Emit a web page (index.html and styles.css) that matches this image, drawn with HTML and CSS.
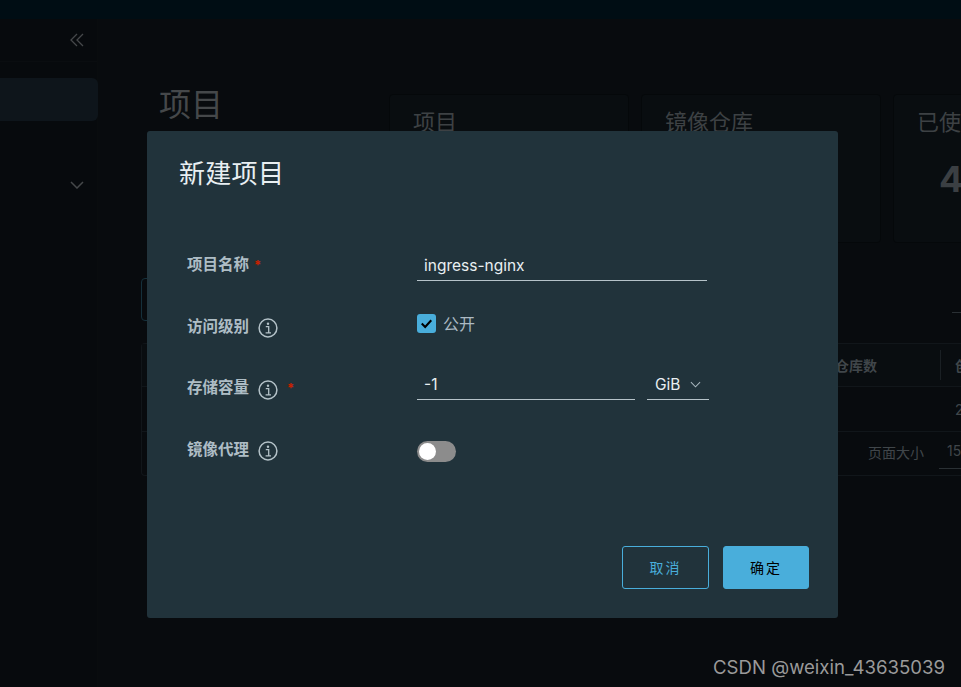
FILE: index.html
```html
<!DOCTYPE html>
<html lang="zh-CN">
<head>
<meta charset="utf-8">
<title>新建项目</title>
<link rel="stylesheet" href="styles.css">
</head>
<body>
<header class="topbar"></header>
<div class="shell">
  <aside class="sidebar">
    <div class="collapse">
      <svg class="collapse-icon" viewBox="0 0 14 14" width="14" height="14"><path d="M7 1 1 7l6 6M13 1 7 7l6 6" fill="none" stroke="#45484a" stroke-width="1.3"/></svg>
    </div>
    <div class="nav-active"></div>
    <div class="nav-group">
      <svg viewBox="0 0 14 8" width="14" height="8"><path d="M1 1l6 6 6-6" fill="none" stroke="#45484a" stroke-width="1.5"/></svg>
    </div>
  </aside>
  <main class="main">
    <section class="summary">
      <h1 class="page-title">项目</h1>
      <div class="cards">
        <div class="card"><h2 class="card-title">项目</h2></div>
        <div class="card"><h2 class="card-title">镜像仓库</h2></div>
        <div class="card"><h2 class="card-title">已使用</h2><div class="card-number">4</div></div>
      </div>
    </section>
    <div class="toolbar">
      <div class="new-button"></div>
      <div class="search-line"></div>
    </div>
    <div class="table">
      <div class="table-row table-head"><span class="col-a">镜像仓库数</span><i class="col-sep"></i><span class="col-b">创建时间</span></div>
      <div class="table-row table-body"><span class="col-b">2</span></div>
      <div class="table-row table-foot"><span class="page-label">页面大小</span><span class="page-size">15</span></div>
    </div>
  </main>
</div>

<div class="modal" role="dialog">
  <h3 class="modal-title">新建项目</h3>
  <form class="form">
    <div class="form-row">
      <label class="label">项目名称<em class="req req-near">*</em></label>
      <input class="field field-name" value="ingress-nginx">
    </div>
    <div class="form-row">
      <label class="label">访问级别
        <svg class="info" viewBox="0 0 20 20" width="20" height="20"><circle cx="10" cy="10" r="8.9" fill="none" stroke="#b4c2c8" stroke-width="1.5"/><circle cx="10" cy="5.8" r="1.2" fill="#b4c2c8"/><path d="M7.8 8.6h2.9v6M7.6 14.8h5.4" fill="none" stroke="#b4c2c8" stroke-width="1.3"/></svg>
      </label>
      <div class="check">
        <span class="check-box"><svg viewBox="0 0 20 20" width="19" height="19"><path d="M5 10l3.6 3.6L15 6.6" fill="none" stroke="#000" stroke-width="2.2"/></svg></span>
        <span class="check-text">公开</span>
      </div>
    </div>
    <div class="form-row">
      <label class="label">存储容量
        <svg class="info" viewBox="0 0 20 20" width="20" height="20"><circle cx="10" cy="10" r="8.9" fill="none" stroke="#b4c2c8" stroke-width="1.5"/><circle cx="10" cy="5.8" r="1.2" fill="#b4c2c8"/><path d="M7.8 8.6h2.9v6M7.6 14.8h5.4" fill="none" stroke="#b4c2c8" stroke-width="1.3"/></svg>
        <em class="req">*</em>
      </label>
      <div class="quota">
        <input class="field field-quota" value="-1">
        <div class="unit"><span>GiB</span><svg viewBox="0 0 12 7" width="11" height="7"><path d="M1 1l5 5 5-5" fill="none" stroke="#a9b8bf" stroke-width="1.1"/></svg></div>
      </div>
    </div>
    <div class="form-row">
      <label class="label">镜像代理
        <svg class="info" viewBox="0 0 20 20" width="20" height="20"><circle cx="10" cy="10" r="8.9" fill="none" stroke="#b4c2c8" stroke-width="1.5"/><circle cx="10" cy="5.8" r="1.2" fill="#b4c2c8"/><path d="M7.8 8.6h2.9v6M7.6 14.8h5.4" fill="none" stroke="#b4c2c8" stroke-width="1.3"/></svg>
      </label>
      <span class="toggle"><span class="knob"></span></span>
    </div>
  </form>
  <div class="actions">
    <button class="btn btn-outline" type="button">取消</button>
    <button class="btn btn-solid" type="button">确定</button>
  </div>
</div>
<div class="watermark">CSDN @weixin_43635039</div>
</body>
</html>
```
FILE: styles.css
```css
* { box-sizing: border-box; }
html, body { height: 100%; }
body {
  margin: 0;
  overflow: hidden;
  background: #080b0e;
  font-family: "Inter", "Noto Sans CJK SC", sans-serif;
  color: #40464a;
}
.topbar { height: 19px; background: #000d14; }
.shell { display: flex; height: 668px; }
.sidebar { width: 98px; flex: none; background: #070a0d; border-right: 1px solid #090c0e; }
.collapse { height: 43px; border-bottom: 1px solid #0a0d10; display: flex; justify-content: flex-end; align-items: center; padding-right: 13px; }
.nav-active { height: 43px; margin: 16px -1px 0 0; background: #0e151b; border-radius: 0 6px 6px 0; }
.nav-group { height: 20px; margin-top: 54px; display: flex; justify-content: flex-end; padding-right: 13px; align-items: center; }
.main { flex: 1; min-width: 0; padding: 75px 0 0 43px; }
.summary { display: flex; align-items: flex-start; height: 149px; }
.page-title { flex: none; margin: 1px 0 0 18px; width: 230px; font-size: 32px; font-weight: 400; line-height: 20px; white-space: nowrap; color: #45484a; }
.cards { display: flex; gap: 12px; flex: none; }
.card { width: 240px; height: 149px; flex: none; border: 1px solid #05080a; border-radius: 4px; background: #090d10; padding: 14px 0 0 23px; }
.card-title { margin: 0; font-size: 22px; font-weight: 400; line-height: 26px; white-space: nowrap; color: #3d4144; }
.card-number { font-size: 36px; font-weight: 700; line-height: 44px; margin: 22px 0 0 22px; color: #3b3f43; }
.toolbar { display: flex; height: 43px; margin-top: 35px; align-items: flex-start; justify-content: space-between; }
.new-button { width: 120px; height: 43px; border: 1px solid #15303b; border-radius: 4px; }
.search-line { width: 9px; height: 1px; background: #2a3034; margin-top: 34px; }
.table { margin-top: 22px; border: 1px solid #11161a; border-right: 0; border-radius: 4px 0 0 4px; }
.table-row { position: relative; display: flex; align-items: center; font-size: 14px; border-bottom: 1px solid #11161a; }
.table-row:last-child { border-bottom: 0; }
.table-head { height: 43px; font-weight: 700; background: #090d10; }
.table-body { height: 45px; }
.table-foot { height: 43px; }
.table-row span, .col-sep { position: absolute; }
.col-a { right: 84px; }
.col-sep { left: 798px; width: 1px; height: 30px; background: #1a2024; }
.col-b { left: 813px; white-space: nowrap; }
.page-label { left: 726px; top: 10px; }
.page-size { left: 797px; top: 10px; width: 40px; padding: 0 0 9px 8px; border-bottom: 1px solid #2a3034; font-size: 14px; }
.modal {
  position: absolute;
  left: 147px;
  top: 131px;
  width: 691px;
  height: 487px;
  background: #21333b;
  border-radius: 3px;
  padding: 23px 29px 29px 32px;
  display: flex;
  flex-direction: column;
}
.modal-title { margin: 0; font-size: 26px; font-weight: 400; line-height: 40px; letter-spacing: .3px; color: #e9eff2; }
.form { margin-top: 40px; padding-left: 8px; flex: 1; }
.form-row { display: grid; grid-template-columns: 230px 1fr; align-items: center; height: 61.5px; }
.label { position: relative; top: .6px; display: flex; align-items: center; gap: 9px; font-size: 15.5px; line-height: 20px; font-weight: 700; color: #aebdc5; }
.info { flex: none; width: 20px; height: 20px; margin-top: 3px; }
.req { font-style: normal; color: #c92100; font-size: 13px; font-weight: 700; }
.req-near { margin-left: -4px; }
.field {
  display: block;
  border: 0;
  border-bottom: 1px solid #b6c3c9;
  background: transparent;
  color: #e9eff2;
  font: 400 15.5px "Inter", sans-serif;
  height: 31px;
  padding: 0 7px;
  outline: 0;
}
.field-name { width: 290px; margin-top: 1px; padding-top: 2px; }
.field-quota { width: 218px; }
.check { display: flex; align-items: center; gap: 7px; margin-top: -6px; }
.check-box { width: 19px; height: 19px; border-radius: 3px; background: #49aedb; display: block; }
.check-box svg { display: block; }
.check-text { font-size: 16px; color: #acbac3; }
.quota { display: flex; gap: 12px; margin-top: -6px; }
.unit { width: 62px; height: 31px; border-bottom: 1px solid #b6c3c9; display: flex; align-items: center; gap: 10px; padding-left: 8px; font-size: 15.5px; color: #e9eff2; }
.toggle { display: block; width: 39px; height: 21px; border-radius: 11px; background: #8c8c8c; padding: 2px; margin-top: 4px; }
.knob { display: block; width: 17px; height: 17px; border-radius: 50%; background: #fff; }
.actions { display: flex; justify-content: flex-end; gap: 14px; }
.btn { width: 87px; height: 43px; border-radius: 3px; padding: 0 0 2px 0; font: 400 14px "Noto Sans CJK SC", sans-serif; letter-spacing: 2px; cursor: pointer; }
.btn-outline { background: transparent; border: 1px solid #49aedb; color: #49aedb; }
.btn-solid { background: #49aedb; border: 1px solid #49aedb; color: #000; width: 86px; }
.watermark { position: absolute; left: 713px; top: 656px; font: 400 18.6px "Inter", sans-serif; color: #9a9a9a; white-space: nowrap; }
```
